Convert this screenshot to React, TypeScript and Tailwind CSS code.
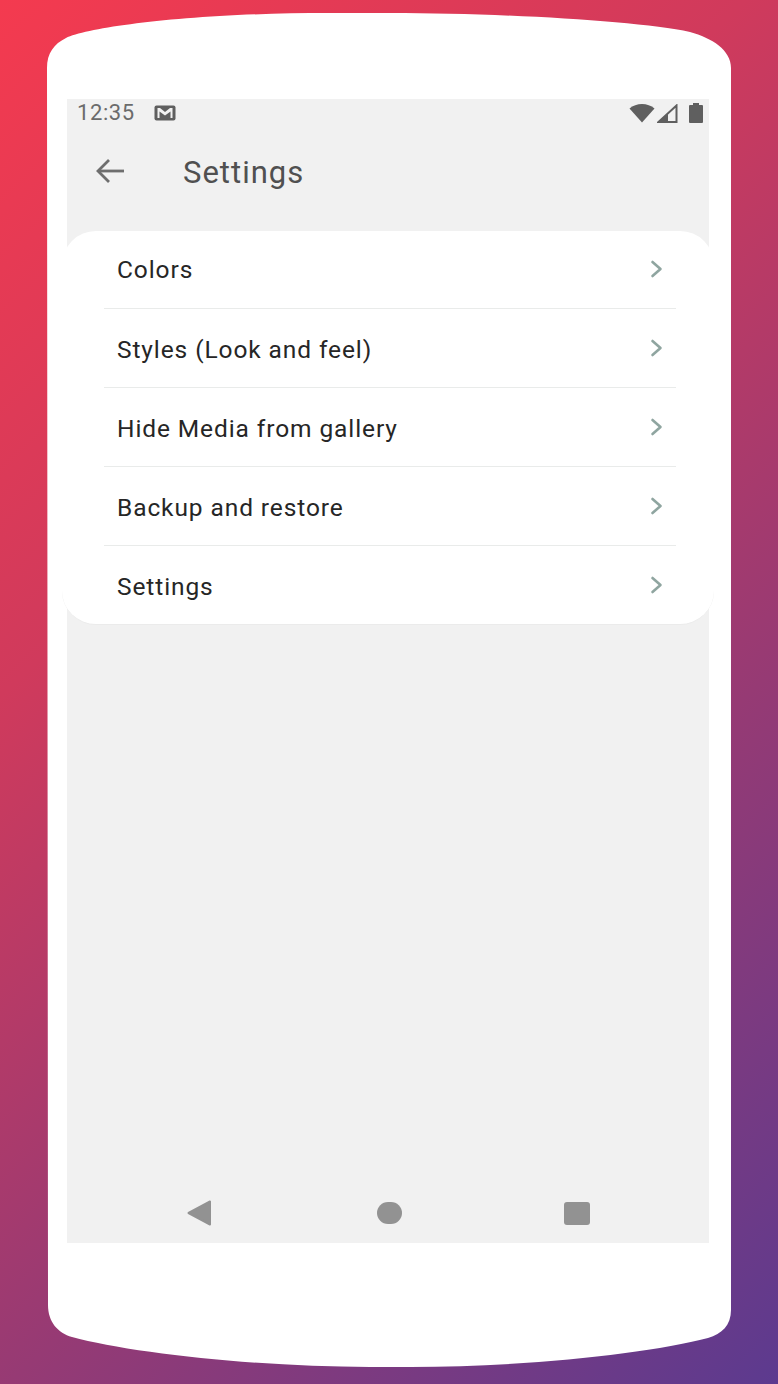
const rows = ["Colors", "Styles (Look and feel)", "Hide Media from gallery", "Backup and restore", "Settings"];

function Row({ label, index }: { label: string; index: number }) {
  const first = index === 0;
  const last = index === rows.length - 1;
  return (
    <div
      className={`ml-[42px] mr-[38px] flex items-center justify-between pl-[13px] pr-[12px] ${first ? "pt-0" : "pt-[4px]"} ${first || last ? "h-[78px]" : "h-[79px]"} ${last ? "" : "border-b border-[#e9ebea]"}`}
    >
      <span className="text-[24.5px] leading-[28px] tracking-[0.9px] text-[#262626]">{label}</span>
      <svg className={first ? "mb-[2px]" : "mb-[4px]"} width="14" height="18" viewBox="0 0 14 18" fill="none" stroke="#8fa5a0" strokeWidth="2.6" strokeLinecap="round" strokeLinejoin="round">
        <path d="M2.5 2 L10.5 9 L2.5 16" />
      </svg>
    </div>
  );
}

export default function App() {
  return (
    <div className="relative h-[1384px] w-[778px] overflow-hidden bg-[linear-gradient(137deg,#f43a4f_0%,#d03a5c_33%,#963a74_66%,#5c3a8f_100%)] font-['Roboto',sans-serif]">
      <svg className="absolute inset-0" width="778" height="1384" viewBox="0 0 778 1384">
        <path
          fill="#fff"
          d="M47 68 C47 53 54 44 66 38 C90 27 190 13 330 13 L390 13 C500 13 640 21 690 32 C712 38 731 50 731 68 L731 1310 C731 1325 722 1334 708 1338 C650 1353 530 1367 410 1367 L370 1367 C260 1367 130 1353 72 1337 C58 1333 48 1322 48 1305 Z"
        />
      </svg>
      <div className="relative ml-[67px] flex h-[1243px] w-[642px] flex-col pt-[99px]">
        <div className="flex h-[1144px] flex-col bg-[#f1f1f1]">
          <div className="flex h-[28px] shrink-0 items-center justify-between pl-[10px] pr-[6px]">
            <div className="flex items-center gap-[19px]">
              <span className="text-[22px] leading-[28px] tracking-[0.6px] text-[#6b6b6b]">12:35</span>
              <svg width="22" height="16" viewBox="0 0 22 16">
                <rect x="0.5" y="0.5" width="21" height="15" rx="2" fill="#5f5f5f" />
                <path d="M3.5 13 V3 H6 L11 7 L16 3 H18.5 V13 H16.5 V6.5 L11 10.5 L5.5 6.5 V13 Z" fill="#f1f1f1" />
              </svg>
            </div>
            <div className="flex items-center">
              <svg width="26" height="20" viewBox="0 0 26 20">
                <path d="M0.5 5.5 C7 -0.5 19 -0.5 25.5 5.5 L13 19.5 Z" fill="#5f5f5f" />
              </svg>
              <svg className="ml-[2px]" width="21" height="19" viewBox="0 0 21 19">
                <path d="M1.5 18 L19.5 1.5 V18 Z" fill="none" stroke="#5f5f5f" strokeWidth="2" />
                <path d="M1.5 18 L11 9.5 V18 Z" fill="#5f5f5f" />
              </svg>
              <svg className="ml-[11px]" width="14" height="20" viewBox="0 0 14 20">
                <path d="M4 0 H10 V2 H13 A1 1 0 0 1 14 3 V19 A1 1 0 0 1 13 20 H1 A1 1 0 0 1 0 19 V3 A1 1 0 0 1 1 2 H4 Z" fill="#5f5f5f" />
              </svg>
            </div>
          </div>
          <div className="flex h-[90px] shrink-0 items-center pl-[28px]">
            <svg className="mb-[2px]" width="30" height="26" viewBox="0 0 30 26" fill="none" stroke="#6e6e6e" strokeWidth="2.8">
              <path d="M29 13 H3" />
              <path d="M14 2 L3 13 L14 24" />
            </svg>
            <span className="ml-[58px] pt-[2px] text-[31px] leading-[36px] tracking-[1px] text-[#505050]">Settings</span>
          </div>
          <div className="mx-[-5px] mt-[14px] shrink-0 rounded-[34px] border-b border-[#ebebeb] bg-white">
            {rows.map((r, i) => (
              <Row key={r} label={r} index={i} />
            ))}
          </div>
          <div className="flex-1" />
          <div className="flex h-[60px] shrink-0 items-center">
            <div className="flex w-full items-center pl-[120px]">
              <svg width="25" height="26" viewBox="0 0 25 26">
                <path d="M23 1.5 V24.5 L1.5 13 Z" fill="#929292" stroke="#929292" strokeWidth="2" strokeLinejoin="round" />
              </svg>
              <div className="ml-[165px] h-[22px] w-[25px] rounded-full bg-[#929292]" />
              <div className="ml-[162px] h-[23px] w-[26px] rounded-[3px] bg-[#929292]" />
            </div>
          </div>
        </div>
      </div>
    </div>
  );
}
